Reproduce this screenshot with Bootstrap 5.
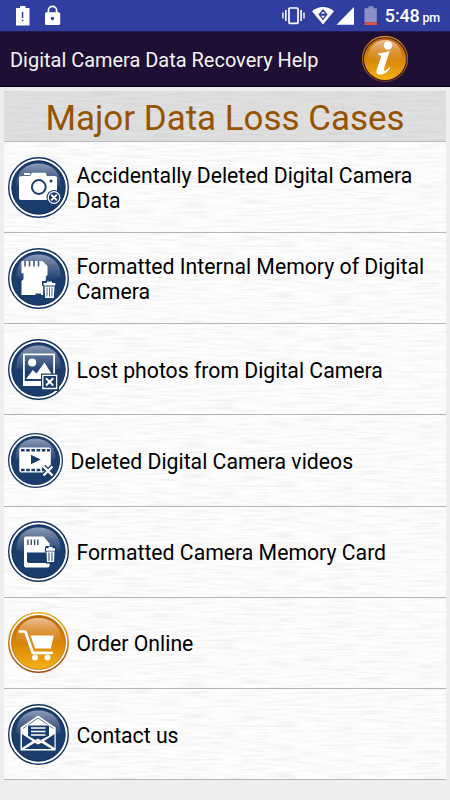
<!DOCTYPE html>
<html lang="en">
<head>
<meta charset="utf-8">
<meta name="viewport" content="width=device-width, initial-scale=1">
<title>Digital Camera Data Recovery Help</title>
<link href="https://cdn.jsdelivr.net/npm/bootstrap@5.3.0/dist/css/bootstrap.min.css" rel="stylesheet">
<style>
body{font-family:Roboto,"Liberation Sans",sans-serif;background:#eee;height:800px;overflow:hidden}
.status{height:31px;background:#303f9f;color:#fff}
.clock{margin-right:10px;padding-top:2px;font-size:18px;line-height:29px;font-weight:500;letter-spacing:-.15px;word-spacing:-1.5px}
.clock span{font-size:12.5px;letter-spacing:-.2px}
.appbar{height:56px;background:#200f35;border-bottom:1px solid #0c0417;border-top:1px solid #281a55;color:#f4f4f4}
.app-title{padding:2px 0 0 10px;font-size:19.97px;line-height:24px;white-space:nowrap}
.info{margin-right:41px}
.panel{margin:4px 4px 0;background-color:#fdfdfd}
.brushed{background-image:url("data:image/svg+xml,%3Csvg xmlns='http://www.w3.org/2000/svg' width='442' height='240'%3E%3Cfilter id='f' x='0' y='0' width='1' height='1'%3E%3CfeTurbulence type='fractalNoise' baseFrequency='.035 .42' numOctaves='2' seed='4' stitchTiles='stitch'/%3E%3CfeColorMatrix values='0 0 0 0 .3 0 0 0 0 .3 0 0 0 0 .3 .3 0 0 0 -.125'/%3E%3C/filter%3E%3Crect width='442' height='240' filter='url(%23f)'/%3E%3C/svg%3E")}
.heading{height:50px;background-color:#dfdfdf;color:#965300;font-size:34.95px;line-height:55px;font-weight:400;white-space:nowrap}
.cases .entry{height:91.2px;border-bottom:1px solid #b5b5b5;padding-left:4px;color:#000;font-size:21.23px;line-height:25px;gap:8px}
.cases .first{border-top:1px solid #bbb;height:92px}
.entry svg{width:61px;height:61px;flex:none}
.entry .short{width:55px;height:55px}
.label{white-space:nowrap;padding-top:2px;margin-left:-.5px}
</style>
</head>
<body>
<svg width="0" height="0" class="position-absolute" aria-hidden="true">
<defs>
<linearGradient id="blueGloss" x1="0" y1="0" x2="0" y2="1"><stop offset="0" stop-color="#8b9bb8"/><stop offset=".45" stop-color="#54698f"/><stop offset="1" stop-color="#1d3e6e"/></linearGradient>
<linearGradient id="goldBase" x1="0" y1="0" x2="0" y2="1"><stop offset="0" stop-color="#b96206"/><stop offset=".5" stop-color="#d98408"/><stop offset="1" stop-color="#f4b115"/></linearGradient>
<linearGradient id="goldGloss" x1="0" y1="0" x2="0" y2="1"><stop offset="0" stop-color="#edc195"/><stop offset="1" stop-color="#d98816" stop-opacity=".4"/></linearGradient>
<linearGradient id="goldRing" x1="0" y1="0" x2="0" y2="1"><stop offset="0" stop-color="#eeb018"/><stop offset="1" stop-color="#9d4d12"/></linearGradient>
<linearGradient id="infoRing" x1="0" y1="0" x2="0" y2="1"><stop offset="0" stop-color="#cf8b14"/><stop offset="1" stop-color="#73340f"/></linearGradient>
<symbol id="blueDisc" viewBox="0 0 61 61"><circle cx="30.5" cy="30.5" r="29.8" fill="#fff" stroke="#123263" stroke-width="1.4"/><circle cx="30.5" cy="30.5" r="26.7" fill="#1b3d6e" stroke="#0b2856" stroke-width="1"/><path d="M8.500 29C8 14 18 6.500 30.500 6.500S53 14 52.500 29Q43 33 30.500 33T8.500 29Z" fill="url(#blueGloss)"/></symbol>
</defs>
</svg>

<header class="status d-flex align-items-center">
<svg width="450" height="31" viewBox="0 0 450 31" class="position-absolute" fill="#fff" aria-hidden="true">
<path d="M16 8h4V6h5.500v2H29.500v17.500H16Z"/><path d="M21.800 12h1.500v6h-1.500zM21.800 19.700h1.500v1.600h-1.500z" fill="#303f9f"/>
<path d="M48.400 13v-2.500a4.100 4.100 0 0 1 8.200 0V13" fill="none" stroke="#fff" stroke-width="1.700"/><rect x="45" y="12.300" width="15.200" height="12.700" rx="1.500"/><circle cx="52.500" cy="18.500" r="1.700" fill="#303f9f"/>
<rect x="289" y="8" width="9" height="15.300" rx=".8" fill="none" stroke="#fff" stroke-width="1.700"/><path d="M285 10h1.600v11H285zM282.200 12.500h1.400v6h-1.400zM300.300 10h1.600v11h-1.600zM303.300 12.500h1.400v6h-1.400z"/>
<path d="M312 11.200Q323 3 334 11.200L323 24.600Z"/><path d="m323 10 3.300 4h-6.600zm-3.300 5.200h6.600l-3.300 4z" fill="none" stroke="#303f9f" stroke-width="1.200"/>
<path d="M336.500 24.700 354 7v17.700Z"/>
<path d="M364.500 8.300h4V6.300h5v2h3.300v14h-12.300Z" fill="#8b91c8"/><path d="M364.500 22.300h12.300V25h-12.300z" fill="#e75239"/>
</svg>
<div class="clock ms-auto text-nowrap">5:48 <span>pm</span></div>
</header>

<nav class="appbar d-flex align-items-center">
<h1 class="app-title m-0 fw-normal">Digital Camera Data Recovery Help</h1>
<svg class="info ms-auto" width="48" height="48" viewBox="0 0 48 48" role="img" aria-label="Information">
<circle cx="24" cy="24" r="22.500" fill="#200f35" stroke="url(#infoRing)" stroke-width="1.300"/><circle cx="24" cy="24" r="21" fill="url(#goldBase)"/><path d="M7 23C7 12 14 5 24 5s17 7 17 18Q33 27 24 27T7 23Z" fill="url(#goldGloss)"/>
<g fill="#fff"><circle cx="27" cy="10.500" r="4.200"/><path d="M17 18.500Q23 17.500 28.700 16L23 33.500Q22 37 24.500 35.600 26.500 34.500 28.200 32.200L29.300 33Q25 39.500 19 39.700 14.300 39.500 15.700 35L19.800 22.500Q20.500 19.800 17 19.700Z"/></g></svg>
</nav>

<main class="panel brushed">
<h2 class="heading brushed text-center m-0">Major Data Loss Cases</h2>
<div class="cases">
<div class="entry first d-flex align-items-center">
<svg viewBox="8 7 61 61"><use href="#blueDisc" x="8" y="7" width="61" height="61"/><g fill="#fff"><path d="M24 23h6v2h-6z"/><path d="M22 26h8l2-3.300h13.500L47 26h8q2 0 2 2v20q0 2-2 2H21q-2 0-2-2V28q0-2 3-2Z"/></g><circle cx="38.800" cy="37" r="6.900" fill="#fff" stroke="#1b3d6e" stroke-width="2"/><circle cx="51" cy="31" r="1.500" fill="#1b3d6e"/><circle cx="54" cy="47.500" r="7.500" fill="#1b3d6e"/><circle cx="54" cy="47.500" r="5.800" fill="#1b3d6e" stroke="#fff" stroke-width="1.200"/><path d="m51.200 44.700 5.600 5.600m0-5.600-5.600 5.600" stroke="#fff" stroke-width="1.800"/></svg>
<div class="label">Accidentally Deleted Digital Camera<br>Data</div></div>

<div class="entry d-flex align-items-center">
<svg viewBox="8 8 61 61"><use href="#blueDisc" x="8" y="8" width="61" height="61"/><path fill="#fff" d="M21.500 21H42.500l5 5v9l-1.700 1.500V41h-2.300v14H41v-1.600H35.500V55H21.500V41l2-1.800v-6h-2Z"/><path d="M25 21v5.500M29.500 21v5.500M34 21v5.500M38.500 21v5.500" stroke="#354f7d" stroke-width="1.500"/><path d="M42 41h15v5h-1.200v13H43.300V46H42Z" fill="#1b3d6e"/><path d="M43.500 43h11.800v2.500H43.500zM47 41.500h5v2h-5zM44.500 46.500h10l-.7 11.500h-8.600Z" fill="#fff"/><path d="M47 47.500v9M49.500 47.500v9M52 47.500v9" stroke="#526b92" stroke-width="1"/></svg>
<div class="label">Formatted Internal Memory of Digital<br>Camera</div></div>

<div class="entry d-flex align-items-center">
<svg viewBox="8 9 61 61"><use href="#blueDisc" x="8" y="9" width="61" height="61"/><path fill="#fff" fill-rule="evenodd" d="M23 23.500h32V56H23zm1.800 1.800V51h28.400V25.300z"/><circle cx="32.200" cy="32.500" r="4" fill="#fff"/><path d="m26 49 6.800-9 3.700 3.500L44.500 32.500l7.500 12v4.500Z" fill="#fff"/><path d="M41 43.500h18V61H41z" fill="#1b3d6e"/><path d="M42.800 45.300h13.800v13.200H42.800z" fill="#1b3d6e" stroke="#fff" stroke-width="1.300"/><path d="m46 48.200 7.200 7.300m0-7.300L46 55.500" stroke="#fff" stroke-width="2"/></svg>
<div class="label">Lost photos from Digital Camera</div></div>

<div class="entry d-flex align-items-center">
<svg class="short" viewBox="8 11.500 55 55"><use href="#blueDisc" x="8" y="11.500" width="55" height="55"/><rect x="19.300" y="26" width="31.500" height="25" rx="2" fill="#fff"/><path d="M21 28.700H50M21 48.500H46" stroke="#1b3d6e" stroke-width="2.600" stroke-dasharray="3.600 1.600"/><path d="m31 33.300 9.700 4.700-9.700 4.700Z" fill="#1b3d6e"/><path d="m43.500 45 9 9m0-9-9 9" stroke="#1b3d6e" stroke-width="5"/><path d="m43.500 45 9 9m0-9-9 9" stroke="#fff" stroke-width="2.400"/></svg>
<div class="label">Deleted Digital Camera videos</div></div>

<div class="entry d-flex align-items-center">
<svg viewBox="8 8 61 61"><use href="#blueDisc" x="8" y="8" width="61" height="61"/><path fill="#fff" d="M26 23.500h17.500l6 7V52.500q0 2-2 2H26q-2 0-2-2v-27q0-2 2-2Z"/><path d="M28 26.500V32M31.300 26.500V32M34.600 26.500V32M37.900 26.500V32" stroke="#354f7d" stroke-width="1.400"/><path d="M27 39.500h20V50H28.500L27 48.500Z" fill="#1b3d6e"/><path d="M45.500 33h10v3h.8v14.500H45.700V38.500h-1.200Z" fill="#1b3d6e"/><path d="M46 35.300h9v2.400h-9zM48.500 33.700h4v2h-4zM46.500 38.500h8L54 49h-7Z" fill="#fff"/><path d="M49 39.500V48M52 39.500V48" stroke="#1b3d6e" stroke-width="1"/></svg>
<div class="label">Formatted Camera Memory Card</div></div>

<div class="entry d-flex align-items-center">
<svg viewBox="8 9 61 61"><circle cx="38.500" cy="39.500" r="29.700" fill="#fff" stroke="url(#goldRing)" stroke-width="1.600"/><circle cx="38.500" cy="39.500" r="27" fill="url(#goldBase)" stroke="#b9690d" stroke-width=".8"/><path d="M16 37C16 23 26 15 38.500 15S61 23 61 37Q51 41 38.500 41T16 37Z" fill="url(#goldGloss)"/><path d="M20 28.500h5.300l7.500 21.300h19" fill="none" stroke="#fff" stroke-width="2.700" stroke-linecap="round" stroke-linejoin="round"/><path d="M30.500 32.500h23.300l-3 13H35Z" fill="#fff"/><circle cx="35" cy="54.500" r="3" fill="#fff"/><circle cx="47.500" cy="54.500" r="3" fill="#fff"/></svg>
<div class="label">Order Online</div></div>

<div class="entry d-flex align-items-center">
<svg viewBox="8 8 61 61"><use href="#blueDisc" x="8" y="8" width="61" height="61"/><path d="M20.500 31.500 38 19.500l17.700 12V54.500H20.500Z" fill="#fff"/><path d="m23 32.500 15-10.500 15.300 10.500" fill="none" stroke="#60769b" stroke-width="1"/><path d="M27.500 29h22v11L38 46 27.500 40Z" fill="#1b3d6e" stroke="#fff"/><path d="M31 32h14.500M31 35.500h14.500M31 39h14.500" stroke="#fff" stroke-width="1.600"/><path d="M22 38 32.500 45 22 52ZM54.500 38 44 45l10.500 7ZM23.500 53l10-7 4.500 2.500 5-2.500 9.500 7Z" fill="#1b3d6e"/><path d="m22 53.500 16-9.800 16.500 9.800" fill="none" stroke="#fff" stroke-width="2"/></svg>
<div class="label">Contact us</div></div>
</div>
</main>
<script src="https://cdn.jsdelivr.net/npm/bootstrap@5.3.0/dist/js/bootstrap.bundle.min.js"></script>
</body>
</html>
